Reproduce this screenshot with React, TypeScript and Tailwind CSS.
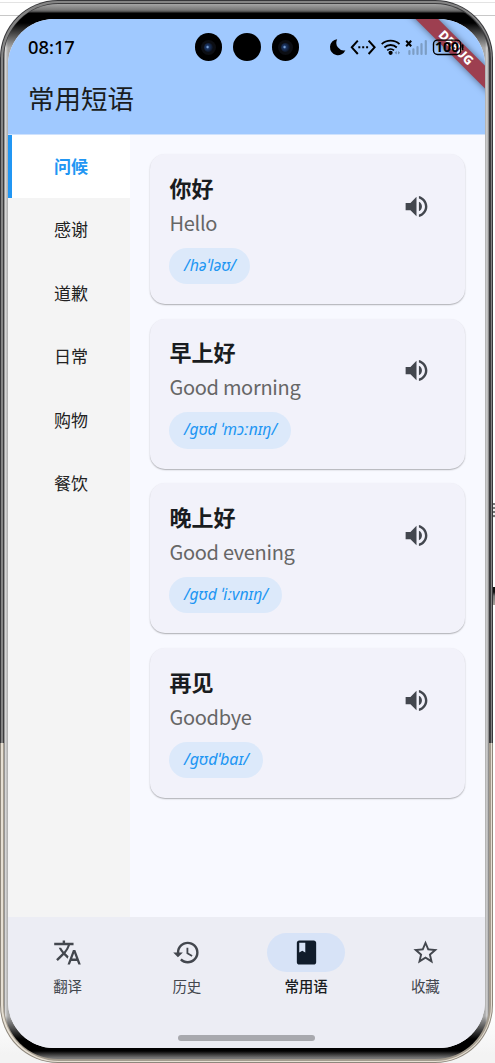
import { useState } from 'react'
import { MdBook, MdHistory, MdStarBorder, MdTranslate, MdVolumeUp } from 'react-icons/md'

const categories = ['问候', '感谢', '道歉', '日常', '购物', '餐饮']

const phrases = [
  { zh: '你好', en: 'Hello', ipa: '/həˈləʊ/', pill: 'w-[81px]', text: 52 },
  { zh: '早上好', en: 'Good morning', ipa: '/ɡʊd ˈmɔːnɪŋ/', pill: 'w-[122px]', text: 93 },
  { zh: '晚上好', en: 'Good evening', ipa: '/ɡʊd ˈiːvnɪŋ/', pill: 'w-[113px]', text: 84 },
  { zh: '再见', en: 'Goodbye', ipa: '/ɡʊdˈbaɪ/', pill: 'w-[94px]', text: 65 },
]

const tabs = [
  { label: '翻译', icon: MdTranslate },
  { label: '历史', icon: MdHistory },
  { label: '常用语', icon: MdBook },
  { label: '收藏', icon: MdStarBorder },
]

function Camera({ lens }: { lens?: boolean }) {
  return (
    <div className="flex size-[27.5px] items-center justify-center rounded-full bg-black">
      {lens && (
        <div className="flex size-[15px] items-center justify-center rounded-full bg-[#0c0e13]">
          <div className="size-[9px] rounded-full bg-[radial-gradient(circle_at_40%_45%,#7fa8de_0_5%,#1b3563_25%,#0a101d_75%)]" />
        </div>
      )}
    </div>
  )
}

function StatusIcons() {
  return (
    <svg width="136" height="20" viewBox="0 0 136 20" fill="none" className="block">
      {/* do not disturb */}
      <path d="M8.2 2.2A8 8 0 1 0 16.4 13.2A7.6 7.6 0 0 1 8.2 2.2Z" fill="#000" />
      {/* vpn */}
      <path d="M28.8 3.6L22.8 10.3L28.8 17M39.6 3.6L45.6 10.3L39.6 17" stroke="#000" strokeWidth="2" />
      <path d="M29.3 10.3h2M33.2 10.3h2M37.1 10.3h2" stroke="#000" strokeWidth="2" />
      {/* wifi */}
      <path d="M52.7 7.2a13 13 0 0 1 17.8 0M55.4 10.5a9 9 0 0 1 12.4 0M58.2 13.4a5 5 0 0 1 6.8 0" stroke="#000" strokeWidth="1.8" />
      <circle cx="61.6" cy="15.8" r="2.1" fill="#000" />
      <path d="M65.6 15.8l2.2-1.8v3.6zM71.2 15.8l-2.2-1.8v3.6z" fill="#6f8daf" />
      {/* no signal */}
      <path d="M77.2 3.8l5 5.4M82.2 3.8l-5 5.4" stroke="#000" strokeWidth="2" />
      <path
        d="M80.4 14v3M84.4 12.4v4.6M88.5 10v7M92.5 7.2v9.8M96.8 4v13"
        stroke="#7c9dc4"
        strokeWidth="2.2"
        strokeLinecap="round"
      />
      {/* battery */}
      <rect x="104.5" y="3.1" width="27.2" height="14.4" rx="4" stroke="#000" strokeWidth="1.4" />
      <path d="M133.6 8.2v4.2" stroke="#000" strokeWidth="1.8" strokeLinecap="round" />
      <text
        x="118"
        y="15.4"
        textAnchor="middle"
        textLength="24"
        lengthAdjust="spacingAndGlyphs"
        fill="#000"
        className="font-['Noto_Sans'] text-[14.5px] font-bold"
      >
        100
      </text>
    </svg>
  )
}

function StatusBar() {
  return (
    <div className="flex h-[56px] items-center pl-5">
      <span className="w-[166.5px] font-['Noto_Sans'] text-[18.3px] font-medium text-black">08:17</span>
      <div className="flex gap-[11px]">
        <Camera lens />
        <Camera />
        <Camera lens />
      </div>
      <div className="relative z-20 ml-[29.5px] shrink-0">
        <StatusIcons />
      </div>
    </div>
  )
}

export default function App() {
  const [category, setCategory] = useState(0)
  const [tab, setTab] = useState(2)

  return (
    <div className="relative h-[1063px] w-[495px] overflow-hidden bg-[linear-gradient(#fff_0_2px,#e3e3e3_2px_3px,#fff_3px_15px,#c8c8c8_15px_16px,#fff_16px_1010px,#f3f3f3_1055px)] font-['Noto_Sans','Noto_Sans_CJK_SC',sans-serif]">
      {/* slivers of the window behind the phone */}
      <div className="absolute top-[503px] right-0 h-[15px] w-[3px] bg-[repeating-linear-gradient(#777_0_2px,#eee_2px_4px)]" />
      <div className="absolute top-[587px] right-0 h-[18px] w-[3px] bg-[linear-gradient(#111_0_5px,#777_9px,#aaa49c)]" />

      {/* metal case */}
      <div className="relative h-full w-[493px] rounded-[58px] bg-[linear-gradient(#37373a_0_743px,#8e877c_743px)] p-px">
        <div className="size-full rounded-[57px] bg-[linear-gradient(#858585_0_742px,#e6dfd3_742px)] p-[1.5px]">
          <div className="size-full rounded-[56px] bg-[linear-gradient(#3c3c3e_0_740px,#a39b8e_740px)] p-[1.5px]">
            <div className="size-full rounded-[54px] bg-[linear-gradient(#a5a5a5_0,#777_6px,#444_8px,#000_9px,#000_19px,transparent_44px,transparent_1012px,#000_1035px,#000_1047px,#777_1054px),linear-gradient(90deg,#777_0,#d5d5d5_1.5px,#aaa_4px,#aaa_481px,#d5d5d5_483px,#777_485px)] px-1 pt-[15px] pb-[11px]">
              <div className="relative flex size-full flex-col overflow-hidden rounded-[46px] bg-[#f8f9ff]">
                <header className="h-[115px] shrink-0 bg-[#a0c9ff]">
                  <StatusBar />
                  <h1 className="pt-[2px] pl-5 text-[26.5px] leading-[44px] text-[#191c20]">常用短语</h1>
                </header>

                {/* debug ribbon */}
                <div className="absolute top-[20.5px] left-[388px] z-10 flex h-[15.5px] w-[120px] rotate-45 items-center justify-center bg-[#9d3f50] text-[12.5px] leading-none font-extrabold text-white shadow-[0_0_7px_rgba(0,0,0,0.5)]">
                  DEBUG
                </div>

                <main className="flex min-h-0 flex-1 border-t border-[#cfe2fd]">
                  <nav className="w-[122px] shrink-0 bg-[#f4f4f4]">
                    {categories.map((name, index) => (
                      <button
                        key={name}
                        onClick={() => setCategory(index)}
                        className={`flex h-[63.4px] w-full items-center justify-center border-l-4 text-[17px] ${
                          index === category
                            ? 'border-[#2196f3] bg-white font-bold text-[#2196f3]'
                            : 'border-transparent text-[#222]'
                        }`}
                      >
                        {name}
                      </button>
                    ))}
                  </nav>

                  <div className="flex flex-1 flex-col gap-[14.7px] pt-[19px] pr-5 pl-[19.5px]">
                    {phrases.map((phrase) => (
                      <article
                        key={phrase.zh}
                        className="flex h-[150px] shrink-0 justify-between rounded-[15px] bg-[#f2f2fa] pt-[17.5px] pl-[20px] shadow-[0_1px_1.5px_rgba(0,0,0,0.3)]"
                      >
                        <div>
                          <h2 className="text-[22px] leading-[32px] font-bold text-[#191c20]">{phrase.zh}</h2>
                          <p className="mt-[4px] font-['Noto_Sans_CJK_SC',sans-serif] text-[20px] leading-[30px] tracking-[-0.3px] text-[#666]">
                            {phrase.en}
                          </p>
                          <div
                            className={`-ml-[0.5px] mt-[10px] flex h-[36.5px] items-center rounded-full bg-[#dce9fa] pl-[14.5px] ${phrase.pill}`}
                          >
                            <svg width={phrase.text + 2} height="24" className="overflow-visible">
                              <text
                                x="0"
                                y="17"
                                textLength={phrase.text}
                                lengthAdjust="spacingAndGlyphs"
                                fill="#2196f3"
                                className="text-[15.5px] italic"
                              >
                                {phrase.ipa}
                              </text>
                            </svg>
                          </div>
                        </div>
                        <button className="mt-[20px] mr-[34px] self-start text-[#43474e]">
                          <MdVolumeUp size={29} />
                        </button>
                      </article>
                    ))}
                  </div>
                </main>

                <footer className="relative flex h-[131.5px] shrink-0 bg-[#ecedf4] pt-[16.5px]">
                  {tabs.map(({ label, icon: Icon }, index) => (
                    <button
                      key={label}
                      onClick={() => setTab(index)}
                      className={`flex flex-1 flex-col items-center text-[14.5px] ${
                        index === tab ? 'font-medium text-[#191c20]' : 'text-[#43474e]'
                      }`}
                    >
                      <span
                        className={`flex h-[39px] w-[78px] items-center justify-center rounded-full ${
                          index === tab ? 'bg-[#d7e3f7] text-[#101c2b]' : ''
                        }`}
                      >
                        <Icon size={29} />
                      </span>
                      <span className="mt-[2.5px] leading-[22px]">{label}</span>
                    </button>
                  ))}
                  <div className="absolute bottom-[7px] left-[170px] h-[6.5px] w-[137px] rounded-full bg-[#a8a9ae]" />
                </footer>
              </div>
            </div>
          </div>
        </div>
      </div>
    </div>
  )
}
